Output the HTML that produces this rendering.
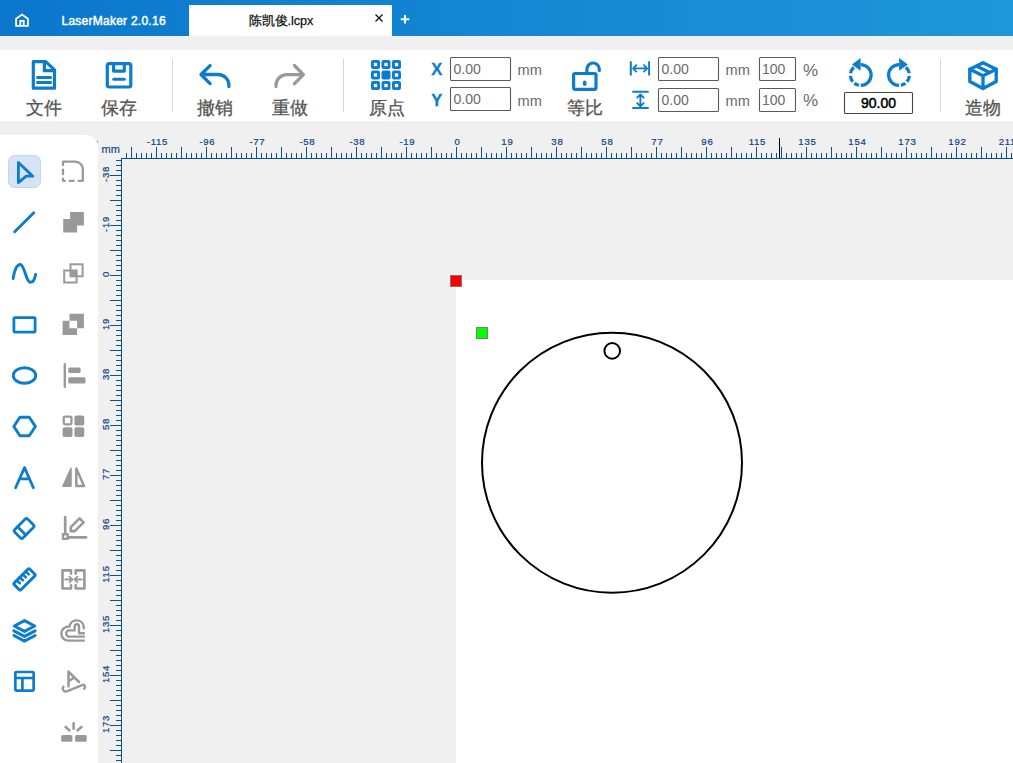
<!DOCTYPE html>
<html><head><meta charset="utf-8"><title>LaserMaker</title>
<style>
html,body{margin:0;padding:0;width:1013px;height:763px;overflow:hidden;background:#f0f0f0;}
svg{position:absolute;left:0;top:0;font-family:"Liberation Sans",sans-serif;}
.rl{font-size:9.6px;letter-spacing:0.7px;fill:#0a4383;stroke:#0a4383;stroke-width:0.2px;}
.cj{font-size:18px;}
</style></head><body>
<svg width="1013" height="763" viewBox="0 0 1013 763">
<defs><linearGradient id="tg" x1="0" y1="0" x2="1" y2="0"><stop offset="0" stop-color="#0a77cc"/><stop offset="1" stop-color="#1f96db"/></linearGradient></defs>
<rect x="0" y="0" width="1013" height="36" fill="url(#tg)"/>
<path d="M16.1 25.8V18.7L22 14.6L27.9 18.7V25.8ZM20.3 25.8V20.9H23.7V25.8" fill="none" stroke="#fff" stroke-width="1.8"/>
<text x="61.5" y="25" font-size="12" fill="#fff" stroke="#fff" stroke-width="0.45" letter-spacing="0.25">LaserMaker 2.0.16</text>
<rect x="189" y="5" width="203" height="31" fill="#fff"/>
<text x="248.5" y="25" font-size="12.6" fill="#111" stroke="#111" stroke-width="0.25">陈凯俊.lcpx</text>
<path d="M375.5 14.5L382.5 21.5M382.5 14.5L375.5 21.5" stroke="#111" stroke-width="1.3"/>
<path d="M400.8 19.2H409.2M405 15V23.4" stroke="#fff" stroke-width="2"/>
<rect x="0" y="50" width="1013" height="71" fill="#fff"/>
<path d="M172.5 59V112" stroke="#d6d6d6" stroke-width="1"/><path d="M343.5 59V112" stroke="#d6d6d6" stroke-width="1"/><path d="M940.5 59V112" stroke="#d6d6d6" stroke-width="1"/>
<g fill="none" stroke="#0b7cce" stroke-width="3.2" stroke-linejoin="round" stroke-linecap="round"><path d="M33.3 61.6H45.7L54.5 69.8V88.2H33.3Z"/><path d="M44.4 61.6V70.7H54.5" stroke-linejoin="miter"/><path d="M37.5 77.4H50.6M37.5 82.4H50.6" stroke-width="3"/></g>
<g fill="none" stroke="#0b7cce" stroke-width="3.2" stroke-linejoin="round" stroke-linecap="round"><rect x="107.3" y="63.6" width="23.5" height="23.4" rx="2"/><path d="M113.6 63.6V71.1H124.3V63.6"/><path d="M113.8 79.3H124.2" stroke-width="3"/></g>
<g fill="none" stroke-width="3.3" stroke-linejoin="round" stroke-linecap="round"><path stroke="#0b7cce" d="M210.1 65.6L201 74.5L210.1 83.6M201 74.5H218.2A10.7 10.7 0 0 1 228.9 85.2V86.5"/><path stroke="#999999" d="M294.5 65.5L303.4 74.6L294.5 83.7M303.4 74.6H286.7A10.7 10.7 0 0 0 276 85.3V86.5"/></g>
<g fill="#0b7cce"><rect x="371.0" y="60.0" width="9" height="9" rx="2"/><rect x="373.85" y="62.85" width="3.3" height="3.3" fill="#fff"/><rect x="371.0" y="70.5" width="9" height="9" rx="2"/><rect x="373.85" y="73.35" width="3.3" height="3.3" fill="#fff"/><rect x="371.0" y="81.0" width="9" height="9" rx="2"/><rect x="373.85" y="83.85" width="3.3" height="3.3" fill="#fff"/><rect x="381.5" y="60.0" width="9" height="9" rx="2"/><rect x="384.35" y="62.85" width="3.3" height="3.3" fill="#fff"/><rect x="381.5" y="70.5" width="9" height="9" rx="2"/><rect x="381.5" y="81.0" width="9" height="9" rx="2"/><rect x="384.35" y="83.85" width="3.3" height="3.3" fill="#fff"/><rect x="392.0" y="60.0" width="9" height="9" rx="2"/><rect x="394.85" y="62.85" width="3.3" height="3.3" fill="#fff"/><rect x="392.0" y="70.5" width="9" height="9" rx="2"/><rect x="394.85" y="73.35" width="3.3" height="3.3" fill="#fff"/><rect x="392.0" y="81.0" width="9" height="9" rx="2"/><rect x="394.85" y="83.85" width="3.3" height="3.3" fill="#fff"/></g>
<g fill="none" stroke="#0b7cce" stroke-width="3.2" stroke-linecap="round" stroke-linejoin="round"><rect x="573.6" y="73.5" width="22.4" height="15.8" rx="1.5"/><path d="M586.9 73.5V69.2A6.2 6.2 0 0 1 599.3 69.2V70.4"/><path d="M584.7 82.2V84.3" stroke-width="3.5"/></g>
<g fill="none" stroke="#0b7cce" stroke-width="1.9" stroke-linecap="round" stroke-linejoin="round"><path d="M630.8 61.2V75.5M649.1 61.2V75.5" stroke-width="2" stroke-linecap="butt"/><path d="M633.2 68.4H647M636.3 65.2L633.1 68.4L636.3 71.6M643.9 65.2L647.1 68.4L643.9 71.6"/><path d="M632.3 91.7H648.7M632.3 108H648.7" stroke-width="2" stroke-linecap="butt"/><path d="M640.4 94.4V106.2M637.2 97.6L640.4 94.4L643.6 97.6M637.2 103.1L640.4 106.3L643.6 103.1"/></g>
<g transform="translate(860.7 75) scale(1 1)" fill="none" stroke="#0b7cce" stroke-width="3.25"><path d="M0.00 -10.40A10.4 10.4 0 0 1 0.00 10.40"/><path d="M-1.81 10.24A10.4 10.4 0 0 1 -6.40 8.20M-7.97 6.68A10.4 10.4 0 0 1 -10.36 0.91M-10.24 -1.81A10.4 10.4 0 0 1 -6.82 -7.85"/><path d="M-0.1 -17.1L-8.8 -10.4L-0.1 -4.2Z" fill="#0b7cce" stroke="none"/></g><g transform="translate(899 75) scale(-1 1)" fill="none" stroke="#0b7cce" stroke-width="3.25"><path d="M0.00 -10.40A10.4 10.4 0 0 1 0.00 10.40"/><path d="M-1.81 10.24A10.4 10.4 0 0 1 -6.40 8.20M-7.97 6.68A10.4 10.4 0 0 1 -10.36 0.91M-10.24 -1.81A10.4 10.4 0 0 1 -6.82 -7.85"/><path d="M-0.1 -17.1L-8.8 -10.4L-0.1 -4.2Z" fill="#0b7cce" stroke="none"/></g>
<g fill="none" stroke="#0b7cce" stroke-width="3.4" stroke-linejoin="round" stroke-linecap="round"><path d="M983 62.8L996.2 69.2V81.4L983 88.6L969.8 81.4V69.2Z"/><path d="M969.8 69.2L983 75.8L996.2 69.2M983 75.8V88.6"/><path d="M976.4 66L989.6 72.6" stroke-linecap="butt"/></g>
<rect x="450.5" y="57.5" width="60" height="23" fill="#fff" stroke="#5a5a5a" stroke-width="1.1" rx="1"/><rect x="450.5" y="87.5" width="60" height="23" fill="#fff" stroke="#5a5a5a" stroke-width="1.1" rx="1"/><rect x="658.5" y="57.5" width="60" height="23" fill="#fff" stroke="#5a5a5a" stroke-width="1.1" rx="1"/><rect x="658.5" y="88.5" width="60" height="23" fill="#fff" stroke="#5a5a5a" stroke-width="1.1" rx="1"/><rect x="759.5" y="57.5" width="36" height="23" fill="#fff" stroke="#5a5a5a" stroke-width="1.1" rx="1"/><rect x="759.5" y="88.5" width="36" height="23" fill="#fff" stroke="#5a5a5a" stroke-width="1.1" rx="1"/><rect x="844.5" y="92.5" width="68" height="21" fill="#fff" stroke="#444" stroke-width="1.1" rx="1"/>
<g class="cj" fill="#555555" stroke="#555555" stroke-width="0.3"><text x="26" y="114">文件</text><text x="100.5" y="114">保存</text><text x="196.5" y="114">撤销</text><text x="271.5" y="114">重做</text><text x="368.5" y="114">原点</text><text x="567" y="114">等比</text><text x="964.5" y="114">造物</text></g>
<g font-weight="bold" fill="#0b7cce" font-size="16.5" stroke="#0b7cce" stroke-width="0.3"><text x="431.2" y="75.4">X</text><text x="431.2" y="105.7">Y</text></g>
<g fill="#6a6a6a" font-size="14"><text x="453.5" y="74">0.00</text><text x="453.5" y="104">0.00</text><text x="661.5" y="74">0.00</text><text x="661.5" y="105">0.00</text><text x="762" y="74">100</text><text x="762" y="105">100</text><text x="517.5" y="75.2" font-size="14.6">mm</text><text x="517.5" y="105.5" font-size="14.6">mm</text><text x="725.5" y="75.2" font-size="14.6">mm</text><text x="725.5" y="106.2" font-size="14.6">mm</text><text x="803" y="75.5" font-size="17">%</text><text x="803" y="106" font-size="17">%</text></g>
<text x="878.5" y="108" text-anchor="middle" font-size="14" fill="#000" stroke="#000" stroke-width="0.5">90.00</text>

<path d="M0 135H86A12 12 0 0 1 98 147V763H0Z" fill="#fff"/>
<rect x="8.5" y="155.5" width="32" height="32" rx="6" fill="#d5e3f4" stroke="#c3d6ee" stroke-width="1"/>
<path fill="none" stroke="#0b7cce" stroke-width="2.8" stroke-linecap="round" stroke-linejoin="round" d="M18.4 162.6L32.8 176.2H26.2L18.4 182.6Z" stroke-linejoin="round"/><path fill="none" stroke="#999999" stroke-width="2.3" stroke-linecap="round" stroke-linejoin="round" d="M63 165.05V161.7H75.3A7.5 7.5 0 0 1 82.8 169.2V180.8H78.65M63 169.75V174.15M63 178.75V180.8H64.95M69.55 180.8H73.75"/>
<path fill="none" stroke="#0b7cce" stroke-width="2.9" stroke-linecap="round" stroke-linejoin="round" d="M14.7 231.7L33.8 212.8"/><path fill="#999999" d="M70.1 212H83.9V225.6H77.1V232.5H63.2V219H70.1Z"/>
<path fill="none" stroke="#0b7cce" stroke-width="2.9" stroke-linecap="round" stroke-linejoin="round" d="M13.1 278.6C14.5 270 17 264.5 20.3 264.5C24.5 264.5 26 282.3 30.4 282.3C33.5 282.3 35 278 35.6 274.4"/><g fill="none" stroke="#999999" stroke-width="2"><rect x="70.5" y="264.3" width="12.1" height="12"/><rect x="64.2" y="270.5" width="12.4" height="12"/></g><rect x="70.5" y="270.5" width="6.1" height="5.8" fill="#999999"/>
<rect fill="none" stroke="#0b7cce" stroke-width="2.8" stroke-linecap="round" stroke-linejoin="round" x="13.9" y="317.6" width="21.2" height="14.6" rx="1"/><path fill="#999999" fill-rule="evenodd" d="M69.5 313.8H83.9V328.2H77.1V335.1H62.6V320.7H69.5ZM69.5 320.7V328.2H77.1V320.7Z"/>
<ellipse fill="none" stroke="#0b7cce" stroke-width="2.9" stroke-linecap="round" stroke-linejoin="round" cx="24.5" cy="375.5" rx="11.2" ry="7.7"/><rect x="63.6" y="362.9" width="2.4" height="25" rx="1.2" fill="#999999"/><rect x="68.2" y="367.5" width="12.4" height="5.6" rx="1.5" fill="#999999"/><rect x="68.2" y="377.3" width="17.3" height="6.2" rx="1.5" fill="#999999"/>
<path fill="none" stroke="#0b7cce" stroke-width="2.9" stroke-linecap="round" stroke-linejoin="round" d="M13.8 426.5L19.9 417.3H29.3L35.4 426.5L29.3 435.7H19.9Z"/><rect x="63.75" y="416.65" width="7.7" height="7.7" rx="1.3" fill="none" stroke="#999999" stroke-width="2.3"/><rect x="74.4" y="415.5" width="9.9" height="10" rx="2" fill="#999999"/><rect x="62.6" y="427.3" width="9.9" height="9.7" rx="2" fill="#999999"/><rect x="74.4" y="427.3" width="9.9" height="9.7" rx="2" fill="#999999"/>
<path fill="none" stroke="#0b7cce" stroke-width="2.8" stroke-linecap="round" stroke-linejoin="round" d="M15.6 487.8L24.5 467.6L33.4 487.8M19.6 478.8H29.4"/><path fill="#999999" stroke="#999999" stroke-width="1.5" stroke-linejoin="round" d="M71 468.3L62.9 486.3H71Z"/><path fill="none" stroke="#999999" stroke-width="2.5" stroke-linejoin="round" d="M76.3 468.6V485.9H84L76.3 468.6Z"/>
<g transform="translate(24.1 528.5) rotate(-45)"><rect fill="none" stroke="#0b7cce" stroke-width="2.8" stroke-linecap="round" stroke-linejoin="round" x="-9.2" y="-5.9" width="18.4" height="11.8" rx="2"/><path fill="none" stroke="#0b7cce" stroke-width="2.8" stroke-linecap="round" stroke-linejoin="round" d="M-3.3 -5.9V5.9"/></g><path fill="none" stroke="#999999" stroke-width="2.7" stroke-linecap="round" stroke-linejoin="round" d="M65.2 517V533.3M68.7 537.4H86"/><rect x="63" y="534.2" width="4.6" height="4.6" fill="none" stroke="#999999" stroke-width="2.3"/><path fill="none" stroke="#999999" stroke-width="2.6" stroke-linecap="round" stroke-linejoin="round" d="M70.8 531.1V527.1L79.6 518.3L83.6 522.3L74.8 531.1Z"/>
<g transform="translate(24.5 579.4) rotate(-45)"><rect fill="none" stroke="#0b7cce" stroke-width="3" stroke-linecap="round" stroke-linejoin="round" x="-11" y="-4.8" width="22" height="9.6" rx="1.5"/><path fill="none" stroke="#0b7cce" stroke-width="2.6" stroke-linecap="round" stroke-linejoin="round" d="M-6 -4.8V-0.6M-1.8 -4.8V-0.6M2.4 -4.8V-0.6M6.6 -4.8V-0.6"/></g><path fill="none" stroke="#999999" stroke-width="2.6" stroke-linecap="round" stroke-linejoin="round" d="M71 573.6V570.4H62.5V588.5H71V585.3M75.7 573.6V570.4H84.4V588.5H75.7V585.3"/><path fill="none" stroke="#999999" stroke-width="1.8" stroke-linecap="round" stroke-linejoin="round" d="M65.2 579.5H72.4M69.4 576.6L72.4 579.5L69.4 582.4M81.7 579.5H74.5M77.5 576.6L74.5 579.5L77.5 582.4"/>
<path fill="none" stroke="#0b7cce" stroke-width="3" stroke-linecap="round" stroke-linejoin="round" d="M24.5 620.6L34.7 626L24.5 631.4L14.3 626Z"/><path fill="none" stroke="#0b7cce" stroke-width="3" stroke-linecap="round" stroke-linejoin="round" d="M13.9 630.8L24.5 636.4L35.1 630.8M13.9 635.5L24.5 641.1L35.1 635.5"/><path fill="none" stroke="#999999" stroke-width="2.4" stroke-linecap="butt" stroke-linejoin="round" d="M84.8 640.6H68.3A7 7 0 0 1 68.3 626.6H69.5A7.2 7.2 0 0 1 83.7 626.2V628.2H84.8"/><path fill="none" stroke="#999999" stroke-width="2.4" stroke-linecap="butt" stroke-linejoin="round" d="M84.8 636.6H68.2A3.4 3.4 0 0 1 68.2 630.4H74.6V626.4A2.2 2.2 0 0 1 79 626.4V633.3H84.8"/>
<rect fill="none" stroke="#0b7cce" stroke-width="2.7" stroke-linecap="round" stroke-linejoin="round" x="15.35" y="672" width="18.3" height="18.6" rx="1"/><path fill="none" stroke="#0b7cce" stroke-width="2.7" stroke-linecap="butt" stroke-linejoin="round" d="M15.35 678H33.65M22.4 678V690.6"/><path fill="none" stroke="#999999" stroke-width="2.5" stroke-linecap="round" stroke-linejoin="round" d="M68.5 686.3V671.6L79 682M68.5 681.2L74.2 677.6"/><path fill="none" stroke="#999999" stroke-width="2.5" stroke-linecap="round" stroke-linejoin="round" d="M63.4 686.8C62.4 688 62.4 690.3 64.6 691.3C65.5 691.6 66.5 691.5 67.5 691.1L82 685.2C84.3 684.2 85.9 685.9 84.3 688.6"/>
<path fill="none" stroke="#999999" stroke-width="2.6" stroke-linecap="round" stroke-linejoin="round" d="M73.6 723.2V728.8M65.6 727L69.4 730.3M81.4 727L77.6 730.3"/><rect x="61.2" y="735" width="11.2" height="6.8" rx="1.6" fill="#999999"/><rect x="75.1" y="735" width="11.6" height="6.8" rx="1.6" fill="#999999"/>

<rect x="456" y="280" width="557" height="483" fill="#fff"/>
<path d="M121 158.5H1013M126.5 153V158M131.5 147V158M136.5 153V158M141.5 153V158M146.5 153V158M151.5 153V158M156.5 147V158M161.5 153V158M166.5 153V158M171.5 153V158M176.5 153V158M181.5 147V158M186.5 153V158M191.5 153V158M196.5 153V158M201.5 153V158M206.5 147V158M211.5 153V158M216.5 153V158M221.5 153V158M226.5 153V158M231.5 147V158M236.5 153V158M241.5 153V158M246.5 153V158M251.5 153V158M256.5 147V158M261.5 153V158M266.5 153V158M271.5 153V158M276.5 153V158M281.5 147V158M286.5 153V158M291.5 153V158M296.5 153V158M301.5 153V158M306.5 147V158M311.5 153V158M316.5 153V158M321.5 153V158M326.5 153V158M331.5 147V158M336.5 153V158M341.5 153V158M346.5 153V158M351.5 153V158M356.5 147V158M361.5 153V158M366.5 153V158M371.5 153V158M376.5 153V158M381.5 147V158M386.5 153V158M391.5 153V158M396.5 153V158M401.5 153V158M406.5 147V158M411.5 153V158M416.5 153V158M421.5 153V158M426.5 153V158M431.5 147V158M436.5 153V158M441.5 153V158M446.5 153V158M451.5 153V158M456.5 147V158M461.5 153V158M466.5 153V158M471.5 153V158M476.5 153V158M481.5 147V158M486.5 153V158M491.5 153V158M496.5 153V158M501.5 153V158M506.5 147V158M511.5 153V158M516.5 153V158M521.5 153V158M526.5 153V158M531.5 147V158M536.5 153V158M541.5 153V158M546.5 153V158M551.5 153V158M556.5 147V158M561.5 153V158M566.5 153V158M571.5 153V158M576.5 153V158M581.5 147V158M586.5 153V158M591.5 153V158M596.5 153V158M601.5 153V158M606.5 147V158M611.5 153V158M616.5 153V158M621.5 153V158M626.5 153V158M631.5 147V158M636.5 153V158M641.5 153V158M646.5 153V158M651.5 153V158M656.5 147V158M661.5 153V158M666.5 153V158M671.5 153V158M676.5 153V158M681.5 147V158M686.5 153V158M691.5 153V158M696.5 153V158M701.5 153V158M706.5 147V158M711.5 153V158M716.5 153V158M721.5 153V158M726.5 153V158M731.5 147V158M736.5 153V158M741.5 153V158M746.5 153V158M751.5 153V158M756.5 147V158M761.5 153V158M766.5 153V158M771.5 153V158M776.5 153V158M781.5 147V158M786.5 153V158M791.5 153V158M796.5 153V158M801.5 153V158M806.5 147V158M811.5 153V158M816.5 153V158M821.5 153V158M826.5 153V158M831.5 147V158M836.5 153V158M841.5 153V158M846.5 153V158M851.5 153V158M856.5 147V158M861.5 153V158M866.5 153V158M871.5 153V158M876.5 153V158M881.5 147V158M886.5 153V158M891.5 153V158M896.5 153V158M901.5 153V158M906.5 147V158M911.5 153V158M916.5 153V158M921.5 153V158M926.5 153V158M931.5 147V158M936.5 153V158M941.5 153V158M946.5 153V158M951.5 153V158M956.5 147V158M961.5 153V158M966.5 153V158M971.5 153V158M976.5 153V158M981.5 147V158M986.5 153V158M991.5 153V158M996.5 153V158M1001.5 153V158M1006.5 147V158M1011.5 153V158M121.5 158V763M116 160.5H121M116 165.5H121M116 170.5H121M110 175.5H121M116 180.5H121M116 185.5H121M116 190.5H121M116 195.5H121M110 200.5H121M116 205.5H121M116 210.5H121M116 215.5H121M116 220.5H121M110 225.5H121M116 230.5H121M116 235.5H121M116 240.5H121M116 245.5H121M110 250.5H121M116 255.5H121M116 260.5H121M116 265.5H121M116 270.5H121M110 275.5H121M116 280.5H121M116 285.5H121M116 290.5H121M116 295.5H121M110 300.5H121M116 305.5H121M116 310.5H121M116 315.5H121M116 320.5H121M110 325.5H121M116 330.5H121M116 335.5H121M116 340.5H121M116 345.5H121M110 350.5H121M116 355.5H121M116 360.5H121M116 365.5H121M116 370.5H121M110 375.5H121M116 380.5H121M116 385.5H121M116 390.5H121M116 395.5H121M110 400.5H121M116 405.5H121M116 410.5H121M116 415.5H121M116 420.5H121M110 425.5H121M116 430.5H121M116 435.5H121M116 440.5H121M116 445.5H121M110 450.5H121M116 455.5H121M116 460.5H121M116 465.5H121M116 470.5H121M110 475.5H121M116 480.5H121M116 485.5H121M116 490.5H121M116 495.5H121M110 500.5H121M116 505.5H121M116 510.5H121M116 515.5H121M116 520.5H121M110 525.5H121M116 530.5H121M116 535.5H121M116 540.5H121M116 545.5H121M110 550.5H121M116 555.5H121M116 560.5H121M116 565.5H121M116 570.5H121M110 575.5H121M116 580.5H121M116 585.5H121M116 590.5H121M116 595.5H121M110 600.5H121M116 605.5H121M116 610.5H121M116 615.5H121M116 620.5H121M110 625.5H121M116 630.5H121M116 635.5H121M116 640.5H121M116 645.5H121M110 650.5H121M116 655.5H121M116 660.5H121M116 665.5H121M116 670.5H121M110 675.5H121M116 680.5H121M116 685.5H121M116 690.5H121M116 695.5H121M110 700.5H121M116 705.5H121M116 710.5H121M116 715.5H121M116 720.5H121M110 725.5H121M116 730.5H121M116 735.5H121M116 740.5H121M116 745.5H121M110 750.5H121M116 755.5H121M116 760.5H121" stroke="#0c5189" stroke-width="1" fill="none" shape-rendering="crispEdges"/>
<text x="157.4" y="145" text-anchor="middle" class="rl">-115</text><text x="207.4" y="145" text-anchor="middle" class="rl">-96</text><text x="257.4" y="145" text-anchor="middle" class="rl">-77</text><text x="307.4" y="145" text-anchor="middle" class="rl">-58</text><text x="357.4" y="145" text-anchor="middle" class="rl">-38</text><text x="407.4" y="145" text-anchor="middle" class="rl">-19</text><text x="457.4" y="145" text-anchor="middle" class="rl">0</text><text x="507.4" y="145" text-anchor="middle" class="rl">19</text><text x="557.4" y="145" text-anchor="middle" class="rl">38</text><text x="607.4" y="145" text-anchor="middle" class="rl">58</text><text x="657.4" y="145" text-anchor="middle" class="rl">77</text><text x="707.4" y="145" text-anchor="middle" class="rl">96</text><text x="757.4" y="145" text-anchor="middle" class="rl">115</text><text x="807.4" y="145" text-anchor="middle" class="rl">135</text><text x="857.4" y="145" text-anchor="middle" class="rl">154</text><text x="907.4" y="145" text-anchor="middle" class="rl">173</text><text x="957.4" y="145" text-anchor="middle" class="rl">192</text><text x="1007.4" y="145" text-anchor="middle" class="rl">211</text>
<text transform="translate(108.9 174) rotate(-90)" text-anchor="middle" class="rl">-38</text><text transform="translate(108.9 224) rotate(-90)" text-anchor="middle" class="rl">-19</text><text transform="translate(108.9 274) rotate(-90)" text-anchor="middle" class="rl">0</text><text transform="translate(108.9 324) rotate(-90)" text-anchor="middle" class="rl">19</text><text transform="translate(108.9 374) rotate(-90)" text-anchor="middle" class="rl">38</text><text transform="translate(108.9 424) rotate(-90)" text-anchor="middle" class="rl">58</text><text transform="translate(108.9 474) rotate(-90)" text-anchor="middle" class="rl">77</text><text transform="translate(108.9 524) rotate(-90)" text-anchor="middle" class="rl">96</text><text transform="translate(108.9 574) rotate(-90)" text-anchor="middle" class="rl">115</text><text transform="translate(108.9 624) rotate(-90)" text-anchor="middle" class="rl">135</text><text transform="translate(108.9 674) rotate(-90)" text-anchor="middle" class="rl">154</text><text transform="translate(108.9 724) rotate(-90)" text-anchor="middle" class="rl">173</text>
<text x="101.5" y="153.3" class="rl" style="font-size:11px;stroke-width:0.15px;letter-spacing:0">mm</text><rect x="97" y="141" width="1" height="1" fill="#2a5f95"/>
<path d="M779.5 138V158" stroke="#000" stroke-width="1" shape-rendering="crispEdges"/>

<g fill="none" stroke="#000" stroke-width="2"><circle cx="612" cy="462.7" r="130"/><circle cx="612.2" cy="350.9" r="7.8"/></g>
<rect x="450.5" y="275.5" width="11" height="11" fill="#f00" stroke="#8a7070" stroke-width="1"/>
<rect x="476.5" y="327.5" width="11" height="11" fill="#0f0" stroke="#6a8a6a" stroke-width="1"/>
</svg>
</body></html>
